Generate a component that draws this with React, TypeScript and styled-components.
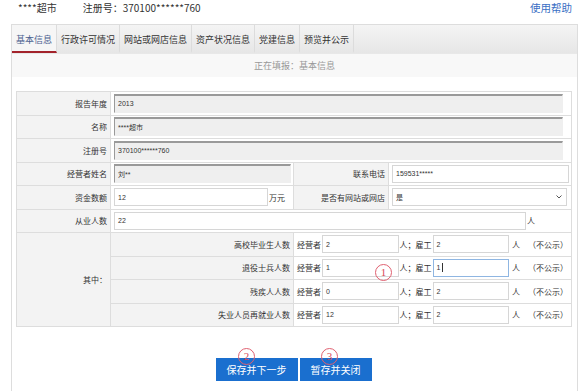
import React from "react";
import styled, { createGlobalStyle } from "styled-components";

const GlobalStyle = createGlobalStyle`
  html, body {
    margin: 0;
    padding: 0;
    background: #ffffff;
  }
  body {
    font-family: "Noto Sans CJK SC", "Noto Sans", sans-serif;
    color: #333333;
  }
`;

const Page = styled.div`
  position: relative;
  width: 585px;
  height: 391px;
  overflow: hidden;
  display: flex;
  flex-direction: column;
`;

const TopBar = styled.div`
  display: flex;
  align-items: flex-start;
  justify-content: space-between;
  height: 24px;
  padding: 0 13px 0 18px;
  box-sizing: border-box;
  font-size: 10px;
  line-height: 16px;
`;

const TopInfo = styled.div`
  display: flex;
  gap: 26px;
  color: #333333;
`;

const HelpLink = styled.a`
  color: #3a6fc4;
  font-size: 10.5px;
  text-decoration: none;
`;

const Panel = styled.div`
  flex: 1;
  margin: 0 7px 0 11px;
  border: 1px solid #dddddd;
  border-bottom: none;
  display: flex;
  flex-direction: column;
`;

const TabBar = styled.div`
  display: flex;
  height: 29px;
  background: linear-gradient(#f4f4f4, #e6e6e6);
  border-bottom: 1px solid #e8e8e8;
  box-sizing: border-box;
`;

const Tab = styled.div<{ active?: boolean }>`
  display: flex;
  align-items: center;
  padding: 2px 4px 0;
  font-size: 9px;
  color: ${p => (p.active ? "#4b6290" : "#333333")};
  border-right: 1px solid #dcdcdc;
  border-bottom: 2px solid ${p => (p.active ? "#a3232b" : "transparent")};
  background: ${p => (p.active ? "#f6f6f6" : "transparent")};
  white-space: nowrap;
`;

const StatusBand = styled.div`
  height: 23px;
  display: flex;
  align-items: center;
  justify-content: center;
  background: #f8f8f8;
  font-size: 9px;
  color: #999999;
`;

const Body = styled.div`
  padding: 14px 6px 0 4px;
  display: flex;
  flex-direction: column;
`;

const FormTable = styled.table`
  width: 555px;
  border-collapse: collapse;
  table-layout: fixed;
  border: 1px solid #d0d0d0;
  font-size: 8px;
  tr {
    height: 23.5px;
  }
`;

const LabelCell = styled.td<{ center?: boolean }>`
  background: #f3f3f3;
  border: 1px solid #dddddd;
  text-align: right;
  padding: 0 3px 0 0;
  white-space: nowrap;
  color: #333333;
`;

const ValueCell = styled.td`
  background: #ffffff;
  border: 1px solid #dddddd;
  padding: 0 3px;
  white-space: nowrap;
`;

const Line = styled.div`
  display: flex;
  align-items: center;
  gap: 1px;
`;

const Field = styled.div<{ w: number; readOnly?: boolean; focused?: boolean }>`
  width: ${p => p.w}px;
  height: ${p => (p.readOnly ? 19 : 18)}px;
  box-sizing: border-box;
  display: flex;
  align-items: center;
  padding-left: 3px;
  font-family: "Liberation Sans", "Noto Sans CJK SC", sans-serif;
  font-size: 7px;
  color: #333333;
  background: ${p => (p.readOnly ? "#efefef" : "#ffffff")};
  border: 1px solid ${p => (p.focused ? "#8fb6e2" : "#d6d6d6")};
  ${p =>
    p.readOnly
      ? "border-top: 2px solid #9a9a9a; border-left: 1px solid #9a9a9a; border-right-color: #efefef; border-bottom-color: #efefef;"
      : ""}
`;

const Caret = styled.span`
  display: inline-block;
  width: 1px;
  height: 9px;
  margin-left: 1px;
  background: #333333;
`;

const SelectBox = styled(Field)`
  justify-content: space-between;
  padding-right: 4px;
  font-family: "Noto Sans CJK SC", sans-serif;
`;

const Unit = styled.span`
  font-size: 8px;
  color: #333333;
`;

const Hidden = styled.span`
  font-size: 8px;
  color: #333333;
  margin-left: 7px;
`;

const ButtonRow = styled.div`
  display: flex;
  justify-content: center;
  gap: 2px;
  margin-top: 31px;
`;

const Button = styled.button`
  height: 23px;
  padding: 0 11px;
  border: none;
  background: #1a6fcf;
  color: #ffffff;
  font-family: "Noto Sans CJK SC", sans-serif;
  font-size: 10px;
`;

const Mark = styled.div<{ x: number; y: number }>`
  position: absolute;
  left: ${p => p.x}px;
  top: ${p => p.y}px;
  width: 17px;
  height: 17px;
  box-sizing: border-box;
  border: 1px solid #e06070;
  border-radius: 50%;
  display: flex;
  align-items: center;
  justify-content: center;
  color: #d84858;
  font-family: "Liberation Serif", serif;
  font-size: 11px;
  line-height: 1;
`;

const Chevron = () => (
  <svg width="6" height="4" viewBox="0 0 6 4">
    <path d="M0.5 0.5 L3 3 L5.5 0.5" fill="none" stroke="#555" strokeWidth="1" />
  </svg>
);

const tabs = ["基本信息", "行政许可情况", "网站或网店信息", "资产状况信息", "党建信息", "预览并公示"];

const employment = [
  { name: "高校毕业生人数", owner: "2", staff: "2" },
  { name: "退役士兵人数", owner: "1", staff: "1", focus: true },
  { name: "残疾人人数", owner: "0", staff: "2" },
  { name: "失业人员再就业人数", owner: "12", staff: "2" },
];

export default function App() {
  return (
    <Page>
      <GlobalStyle />
      <TopBar>
        <TopInfo>
          <span>****超市</span>
          <span>注册号：370100******760</span>
        </TopInfo>
        <HelpLink href="#">使用帮助</HelpLink>
      </TopBar>
      <Panel>
        <TabBar>
          {tabs.map((t, i) => (
            <Tab key={t} active={i === 0}>
              {t}
            </Tab>
          ))}
        </TabBar>
        <StatusBand>正在填报：基本信息</StatusBand>
        <Body>
          <FormTable>
            <colgroup>
              <col style={{ width: 94 }} />
              <col style={{ width: 183 }} />
              <col style={{ width: 95 }} />
              <col style={{ width: 183 }} />
            </colgroup>
            <tbody>
              <tr>
                <LabelCell>报告年度</LabelCell>
                <ValueCell colSpan={3}>
                  <Field w={449} readOnly>2013</Field>
                </ValueCell>
              </tr>
              <tr>
                <LabelCell>名称</LabelCell>
                <ValueCell colSpan={3}>
                  <Field w={449} readOnly>****超市</Field>
                </ValueCell>
              </tr>
              <tr>
                <LabelCell>注册号</LabelCell>
                <ValueCell colSpan={3}>
                  <Field w={449} readOnly>370100******760</Field>
                </ValueCell>
              </tr>
              <tr>
                <LabelCell>经营者姓名</LabelCell>
                <ValueCell>
                  <Field w={177} readOnly>刘**</Field>
                </ValueCell>
                <LabelCell>联系电话</LabelCell>
                <ValueCell>
                  <Field w={177}>159531*****</Field>
                </ValueCell>
              </tr>
              <tr>
                <LabelCell>资金数额</LabelCell>
                <ValueCell>
                  <Line>
                    <Field w={154}>12</Field>
                    <Unit>万元</Unit>
                  </Line>
                </ValueCell>
                <LabelCell>是否有网站或网店</LabelCell>
                <ValueCell>
                  <SelectBox w={175}>
                    <span>是</span>
                    <Chevron />
                  </SelectBox>
                </ValueCell>
              </tr>
              <tr>
                <LabelCell>从业人数</LabelCell>
                <ValueCell colSpan={3}>
                  <Line>
                    <Field w={412}>22</Field>
                    <Unit>人</Unit>
                  </Line>
                </ValueCell>
              </tr>
              {employment.map((r, i) => (
                <tr key={r.name}>
                  {i === 0 && <LabelCell rowSpan={4}>其中：</LabelCell>}
                  <LabelCell>{r.name}</LabelCell>
                  <ValueCell colSpan={2}>
                    <Line>
                      <Unit>经营者</Unit>
                      <Field w={79}>{r.owner}</Field>
                      <Unit>人；雇工</Unit>
                      <Field w={79} focused={r.focus}>
                        {r.staff}
                        {r.focus && <Caret />}
                      </Field>
                      <Unit>&nbsp;人</Unit>
                      <Hidden>（不公示）</Hidden>
                    </Line>
                  </ValueCell>
                </tr>
              ))}
            </tbody>
          </FormTable>
          <ButtonRow>
            <Button>保存并下一步</Button>
            <Button>暂存并关闭</Button>
          </ButtonRow>
        </Body>
      </Panel>
      <Mark x={375} y={264}>1</Mark>
      <Mark x={238} y={348}>2</Mark>
      <Mark x={321} y={348}>3</Mark>
    </Page>
  );
}
